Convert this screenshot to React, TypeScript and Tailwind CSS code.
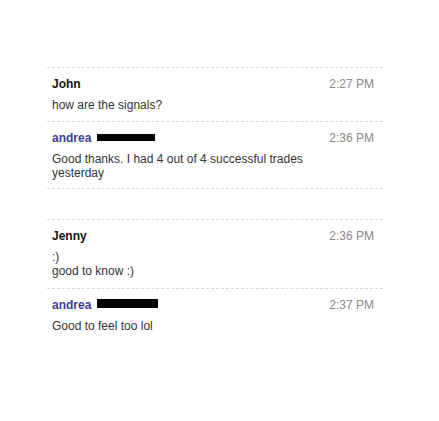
export default function App() {
  return (
    <div className="min-h-screen bg-white pt-[67px] font-['Liberation_Sans',Arial,sans-serif] text-[12px] leading-[14px]">
      <div className="ml-[47px] w-[336px]">
        <div className="border-t border-dashed border-[#d9d9d9] pl-[5px] pr-[9px] pt-[9px] pb-[9px]">
          <div className="flex justify-between">
            <span className="font-bold text-[#111]">John</span>
            <span className="text-[#888]">2:27 PM</span>
          </div>
          <div className="mt-[7px] text-[#333]">how are the signals?</div>
        </div>

        <div className="border-t border-dashed border-[#d9d9d9] pl-[5px] pr-[9px] pt-[9px] pb-[8px]">
          <div className="flex justify-between">
            <span className="flex items-start">
              <span className="font-bold text-[#3d3d96]">andrea</span>
              <span className="ml-[6px] mt-[3px] h-[7px] w-[58px] bg-black" />
            </span>
            <span className="text-[#888]">2:36 PM</span>
          </div>
          <div className="mt-[7px] text-[#333]">
            Good thanks. I had 4 out of 4 successful trades
            <br />
            yesterday
          </div>
        </div>

        <div className="h-[31px] border-t border-dashed border-[#d9d9d9]" />

        <div className="border-t border-dashed border-[#d9d9d9] pl-[5px] pr-[9px] pt-[9px] pb-[10px]">
          <div className="flex justify-between">
            <span className="font-bold text-[#111]">Jenny</span>
            <span className="text-[#888]">2:36 PM</span>
          </div>
          <div className="mt-[7px] text-[#333]">
            <div>:)</div>
            <div>good to know :)</div>
          </div>
        </div>

        <div className="border-t border-dashed border-[#d9d9d9] pl-[5px] pr-[9px] pt-[9px] pb-[9px]">
          <div className="flex justify-between">
            <span className="flex items-start">
              <span className="font-bold text-[#3d3d96]">andrea</span>
              <span className="ml-[6px] mt-[1px] h-[9px] w-[61px] bg-black" />
            </span>
            <span className="text-[#888]">2:37 PM</span>
          </div>
          <div className="mt-[7px] text-[#333]">Good to feel too lol</div>
        </div>
      </div>
    </div>
  );
}
